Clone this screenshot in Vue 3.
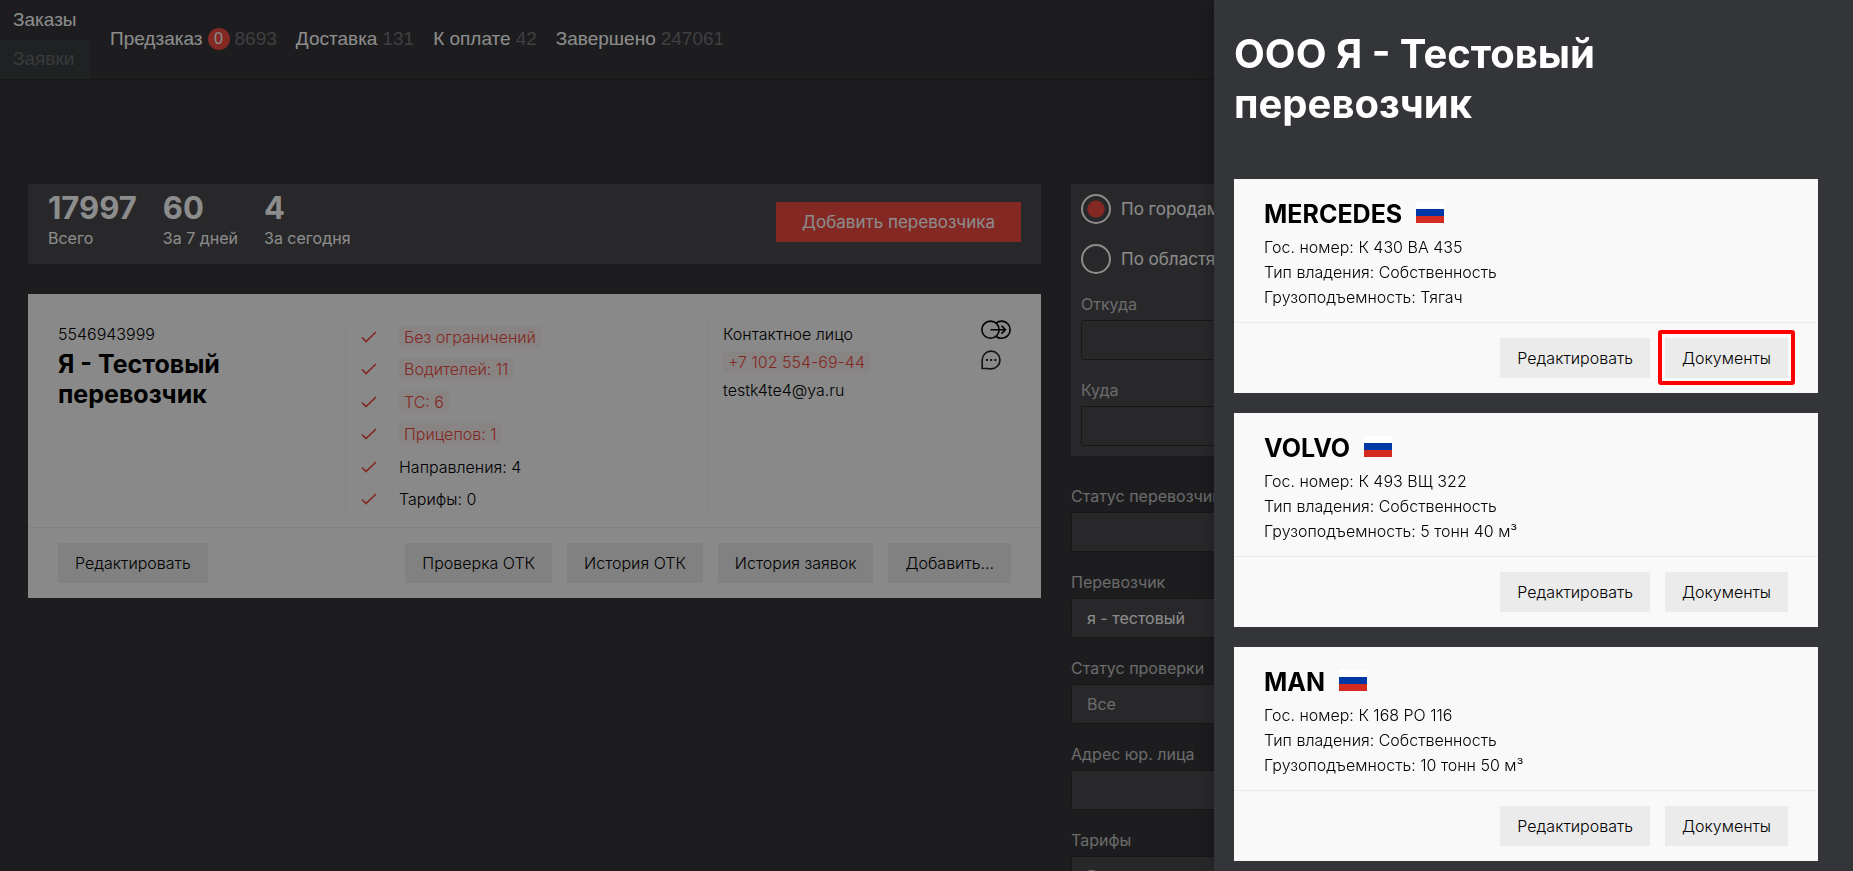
<script setup>
import { ref } from 'vue'

const stages = [
  { name: 'Предзаказ', badge: '0', count: '8693' },
  { name: 'Доставка', count: '131' },
  { name: 'К оплате', count: '42' },
  { name: 'Завершено', count: '247061' },
]

const stats = [
  { value: '17997', label: 'Всего' },
  { value: '60', label: 'За 7 дней' },
  { value: '4', label: 'За сегодня' },
]

const checks = [
  { text: 'Без ограничений', link: true },
  { text: 'Водителей: 11', link: true },
  { text: 'ТС: 6', link: true },
  { text: 'Прицепов: 1', link: true },
  { text: 'Направления: 4', link: false },
  { text: 'Тарифы: 0', link: false },
]

const actions = ['Проверка ОТК', 'История ОТК', 'История заявок', 'Добавить...']

const vehicles = [
  { name: 'MERCEDES', plate: 'К 430 ВА 435', load: 'Тягач', marked: true },
  { name: 'VOLVO', plate: 'К 493 ВЩ 322', load: '5 тонн 40 м³', marked: false },
  { name: 'MAN', plate: 'К 168 РО 116', load: '10 тонн 50 м³', marked: false },
]

const scope = ref('city')
const carrier = ref('я - тестовый')
</script>

<template>
  <div class="app">
    <header class="topbar">
      <nav class="tabs">
        <a class="tab" href="#orders">Заказы</a>
        <a class="tab inactive" href="#requests">Заявки</a>
      </nav>
      <nav class="stages">
        <a v-for="s in stages" :key="s.name" class="stage" href="#stage">
          <span>{{ s.name }}</span>
          <span v-if="s.badge" class="badge">{{ s.badge }}</span>
          <span class="count">{{ s.count }}</span>
        </a>
      </nav>
    </header>

    <div class="layout">
      <main class="content">
        <section class="stats">
          <div v-for="s in stats" :key="s.label" class="stat">
            <strong>{{ s.value }}</strong>
            <span>{{ s.label }}</span>
          </div>
          <button class="add" type="button">Добавить перевозчика</button>
        </section>

        <article class="card">
          <div class="carrier">
            <div class="identity">
              <p class="inn">5546943999</p>
              <h2>Я - Тестовый перевозчик</h2>
            </div>
            <ul class="checks">
              <li v-for="c in checks" :key="c.text">
                <svg width="16" height="12" viewBox="0 0 16 12" aria-hidden="true">
                  <path d="M1 6.5 5 10.5 15 1" fill="none" stroke="#f04942" stroke-width="1.7" />
                </svg>
                <a v-if="c.link" class="tag" href="#details">{{ c.text }}</a>
                <span v-else>{{ c.text }}</span>
              </li>
            </ul>
            <div class="contact">
              <div class="lines">
                <span>Контактное лицо</span>
                <a class="tag" href="tel:+71025546944">+7 102 554-69-44</a>
                <span>testk4te4@ya.ru</span>
              </div>
              <div class="icons">
                <button type="button" aria-label="Передать">
                  <svg width="30" height="20" viewBox="0 0 30 20" fill="none" stroke="#000" stroke-width="1.6">
                    <circle cx="9.5" cy="9.7" r="8.6" />
                    <path d="M15 3.1A8.6 8.6 0 1 1 15 16.3" />
                    <path d="M9.5 9.7H24M20.5 5.8 24.4 9.7 20.5 13.6" />
                  </svg>
                </button>
                <button type="button" aria-label="Сообщения">
                  <svg width="20" height="20" viewBox="0 0 20 20">
                    <path d="M1.2 18.5V10A8.9 8.9 0 1 1 10.1 18.9C8.5 18.9 7.5 18.5 6 18.5Z" fill="none" stroke="#222" stroke-width="1.6" />
                    <path d="M5 9h2v2H5zM9.2 9h2v2h-2zM13.4 9h2v2h-2z" fill="#222" />
                  </svg>
                </button>
              </div>
            </div>
          </div>
          <footer class="actions">
            <button class="btn first" type="button">Редактировать</button>
            <button v-for="a in actions" :key="a" class="btn" type="button">{{ a }}</button>
          </footer>
        </article>
      </main>

      <aside class="filters">
        <div class="route">
          <label class="radio"><input v-model="scope" type="radio" name="scope" value="city" />По городам</label>
          <label class="radio"><input v-model="scope" type="radio" name="scope" value="region" />По областям</label>
          <div class="field">
            <label for="from">Откуда</label>
            <input id="from" type="text" />
          </div>
          <div class="field">
            <label for="to">Куда</label>
            <input id="to" type="text" />
          </div>
        </div>
        <div class="field">
          <label for="status">Статус перевозчика</label>
          <select id="status"><option></option></select>
        </div>
        <div class="field">
          <label for="carrier">Перевозчик</label>
          <input id="carrier" v-model="carrier" type="text" />
        </div>
        <div class="field">
          <label for="check">Статус проверки</label>
          <select id="check"><option>Все</option></select>
        </div>
        <div class="field">
          <label for="address">Адрес юр. лица</label>
          <input id="address" type="text" />
        </div>
        <div class="field">
          <label for="rates">Тарифы</label>
          <select id="rates"><option>Все</option></select>
        </div>
      </aside>
    </div>

    <div class="overlay"></div>

    <aside class="drawer">
      <h1>ООО Я - Тестовый перевозчик</h1>
      <article v-for="v in vehicles" :key="v.name" class="vehicle">
        <div class="info">
          <h3>
            {{ v.name }}
            <svg width="28" height="21" viewBox="0 0 28 21" aria-hidden="true">
              <path d="M0 0h28v7H0z" fill="#fff" />
              <path d="M0 7h28v7H0z" fill="#0039a6" />
              <path d="M0 14h28v7H0z" fill="#d52b1e" />
            </svg>
          </h3>
          <p>Гос. номер: {{ v.plate }}</p>
          <p>Тип владения: Собственность</p>
          <p>Грузоподъемность: {{ v.load }}</p>
        </div>
        <footer class="actions end">
          <button class="btn" type="button">Редактировать</button>
          <button class="btn" :class="{ marked: v.marked }" type="button">Документы</button>
        </footer>
      </article>
    </aside>
  </div>
</template>

<style>
body {
  margin: 0;
  background: #353539;
}
</style>

<style scoped>
.app {
  position: relative;
  height: 100vh;
  overflow: hidden;
  background: #353539;
  color: #fff;
  font: 400 16px/22px Inter, "Liberation Sans", sans-serif;
}
.app *,
.app *::after {
  box-sizing: border-box;
}
h1, h2, h3, p, ul {
  margin: 0;
  padding: 0;
}
a {
  color: inherit;
  text-decoration: none;
}
button, input, select {
  font: inherit;
  color: inherit;
  margin: 0;
  border: 0;
}
.topbar {
  display: flex;
  height: 80px;
  border-bottom: 1px solid #2a2a2c;
  font-family: "Liberation Sans", Arial, sans-serif;
  font-size: 19px;
}
.tabs {
  display: flex;
  flex-direction: column;
  width: 91px;
}
.tab {
  flex: 1;
  display: flex;
  align-items: center;
  padding-left: 13px;
}
.tab.inactive {
  background: #3a3e41;
  color: #66686b;
}
.stages {
  display: flex;
  align-items: center;
  gap: 19px;
  padding: 0 0 2px 19px;
}
.stage {
  display: flex;
  align-items: center;
  gap: 5px;
}
.badge {
  width: 22px;
  height: 22px;
  border-radius: 50%;
  background: #f04942;
  font-size: 16px;
  text-align: center;
}
.count {
  color: #737377;
}
.layout {
  display: flex;
  gap: 30px;
  padding: 104px 28px 28px;
}
.content {
  flex: 1;
  min-width: 0;
}
.stats {
  display: flex;
  gap: 26px;
  height: 80px;
  padding: 5px 20px 9px;
  background: #4a4a4e;
}
.stat {
  display: flex;
  flex-direction: column;
}
.stat strong {
  font-size: 31px;
  line-height: 38px;
}
.add {
  align-self: center;
  height: 40px;
  margin-left: auto;
  padding: 0 26px;
  background: #f04942;
  font-size: 17px;
}
.card {
  margin-top: 30px;
  background: #f9f9f9;
  color: #000;
  font-weight: 300;
}
.carrier {
  display: grid;
  grid-template-columns: 287fr 362fr 304fr;
  padding: 30px 30px 15px;
}
.inn {
  line-height: 20px;
}
.identity h2 {
  max-width: 220px;
  margin-top: 5px;
  font-size: 25px;
  line-height: 30px;
}
.checks {
  display: flex;
  flex-direction: column;
  justify-content: space-between;
  min-height: 188px;
  padding-left: 15px;
  border-left: 1px solid #ebebeb;
  list-style: none;
}
.checks li {
  display: flex;
  align-items: center;
  gap: 22px;
  height: 25px;
}
.tag {
  padding: 0 5px;
  background: rgba(240, 73, 66, 0.05);
  color: #f04942;
}
.contact {
  display: flex;
  justify-content: space-between;
  padding-left: 15px;
  border-left: 1px solid #ebebeb;
}
.lines {
  display: flex;
  flex-direction: column;
  align-items: flex-start;
  gap: 8px;
  line-height: 20px;
}
.icons {
  display: flex;
  flex-direction: column;
  align-items: flex-start;
  gap: 10px;
  margin-top: -4px;
}
.icons button {
  display: flex;
  padding: 0;
  background: none;
}
.actions {
  display: flex;
  gap: 15px;
  padding: 15px 30px;
  border-top: 1px solid #ebebeb;
}
.actions.end {
  justify-content: flex-end;
}
.btn {
  position: relative;
  height: 40px;
  padding: 0 17px;
  background: #ebebeb;
  color: #000;
}
.btn.first {
  margin-right: auto;
}
.filters {
  flex: 0 0 754px;
}
.route {
  margin-bottom: 30px;
  padding: 10px;
  background: #4a4a4e;
}
.radio {
  display: flex;
  align-items: center;
  gap: 10px;
  height: 30px;
  margin-bottom: 20px;
  font-size: 17px;
}
.radio input {
  appearance: none;
  width: 30px;
  height: 30px;
  border: 2px solid #fff;
  border-radius: 50%;
}
.radio input:checked {
  background: radial-gradient(circle, #f04942 8px, transparent 9px);
}
.field {
  display: flex;
  flex-direction: column;
  gap: 6px;
  margin-bottom: 20px;
}
.route .field:last-child {
  margin-bottom: 0;
}
.field label {
  color: #c3c3c3;
  line-height: 20px;
}
.field input,
.field select {
  appearance: none;
  height: 40px;
  padding: 0 15px;
  border: 1px solid #2a2a2c;
  border-radius: 3px;
  background: #4a4a4e;
}
.field select {
  color: #c3c3c3;
}
.overlay {
  position: fixed;
  inset: 0;
  background: rgba(0, 0, 0, 0.45);
}
.drawer {
  position: fixed;
  top: 0;
  right: 0;
  bottom: 0;
  width: 639px;
  padding: 29px 35px 0 20px;
  overflow-y: auto;
  background: #343539;
  box-shadow: 0 0 20px rgba(0, 0, 0, 0.3);
}
.drawer h1 {
  max-width: 460px;
  margin-bottom: 50px;
  font-size: 40px;
  line-height: 50px;
}
.vehicle {
  background: #f9f9f9;
  color: #000;
  font-weight: 300;
}
.vehicle + .vehicle {
  margin-top: 20px;
}
.info {
  padding: 20px 30px 12px;
  line-height: 25px;
}
.info h3 {
  display: flex;
  align-items: center;
  gap: 14px;
  margin-bottom: 6px;
  font-size: 25px;
  line-height: 30px;
}
.info svg {
  margin-bottom: 4px;
}
.btn.marked::after {
  content: "";
  position: absolute;
  inset: -8px -7px -7px;
  border: 4px solid #f00;
  border-radius: 3px;
}
</style>
